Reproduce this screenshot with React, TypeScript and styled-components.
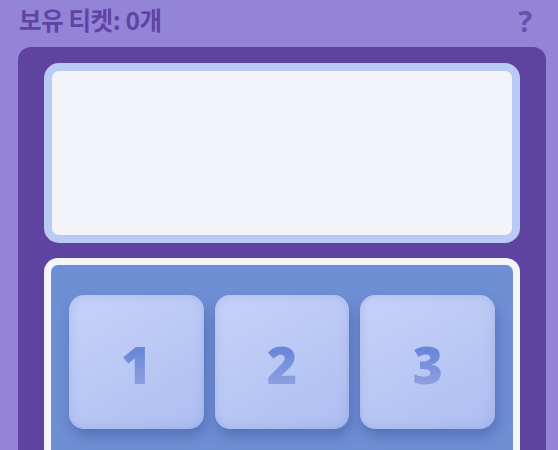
import React from "react";
import styled, { createGlobalStyle } from "styled-components";

const Global = createGlobalStyle`
  html, body { margin: 0; padding: 0; background: #9484d8; overflow: hidden; }
  body { font-family: "Noto Sans", "Noto Sans CJK KR", sans-serif; }
`;

const Page = styled.div`
  width: 558px;
  height: 450px;
  background: #9484d8;
  padding: 0 12px 0 18px;
  box-sizing: border-box;
  display: flex;
  flex-direction: column;
`;

const Header = styled.header`
  display: flex;
  justify-content: space-between;
  align-items: center;
  height: 40px;
  padding: 0 14px 0 1px;
  margin-top: -1px;
  margin-bottom: 8px;
`;

const Tickets = styled.div`
  font-family: "Noto Sans CJK KR", sans-serif;
  font-weight: 700;
  font-size: 24.5px;
  color: #5f45a3;
  letter-spacing: -0.4px;
`;

const Help = styled.button`
  border: none;
  background: none;
  padding: 0;
  margin-top: 3px;
  font-family: "Noto Sans", sans-serif;
  font-weight: 700;
  font-size: 29px;
  color: #6a50b2;
  cursor: pointer;
`;

const Machine = styled.main`
  flex: 1;
  background: #5f43a0;
  border-radius: 13px 13px 0 0;
  padding: 16px 26px 0;
  display: flex;
  flex-direction: column;
  gap: 15px;
`;

const Display = styled.div`
  height: 164px;
  border: 8px solid #b9cbf5;
  border-radius: 15px;
  background: #f2f4f9;
`;

const Keypad = styled.div`
  flex: 1;
  border: 7px solid #f4f5fa;
  border-bottom: none;
  border-radius: 14px 14px 0 0;
  background: #6f8fd5;
  padding: 30px 18px 0;
  display: grid;
  grid-template-columns: repeat(3, 1fr);
  grid-auto-rows: 134px;
  column-gap: 11px;
`;

const Key = styled.button`
  border: none;
  border-radius: 15px;
  background: linear-gradient(150deg, #c6d2f9 0%, #bac8f5 50%, #aebdf1 100%);
  box-shadow: 2px 8px 14px rgba(60, 80, 150, 0.45),
    inset 0 0 10px rgba(120, 140, 200, 0.35);
  display: flex;
  align-items: center;
  justify-content: center;
  padding: 4px 0 0;
  cursor: pointer;
`;

const Digit = styled.span`
  font-family: "Open Sans", "Noto Sans", sans-serif;
  font-weight: 800;
  font-size: 52px;
  line-height: 1;
  background: linear-gradient(180deg, #6a87d8 25%, #8b9fe0 85%);
  -webkit-background-clip: text;
  background-clip: text;
  color: transparent;
`;

export default function App() {
  return (
    <>
      <Global />
      <Page>
        <Header>
          <Tickets>보유 티켓: 0개</Tickets>
          <Help>?</Help>
        </Header>
        <Machine>
          <Display />
          <Keypad>
            {[1, 2, 3].map((n) => (
              <Key key={n}>
                <Digit>{n}</Digit>
              </Key>
            ))}
          </Keypad>
        </Machine>
      </Page>
    </>
  );
}
